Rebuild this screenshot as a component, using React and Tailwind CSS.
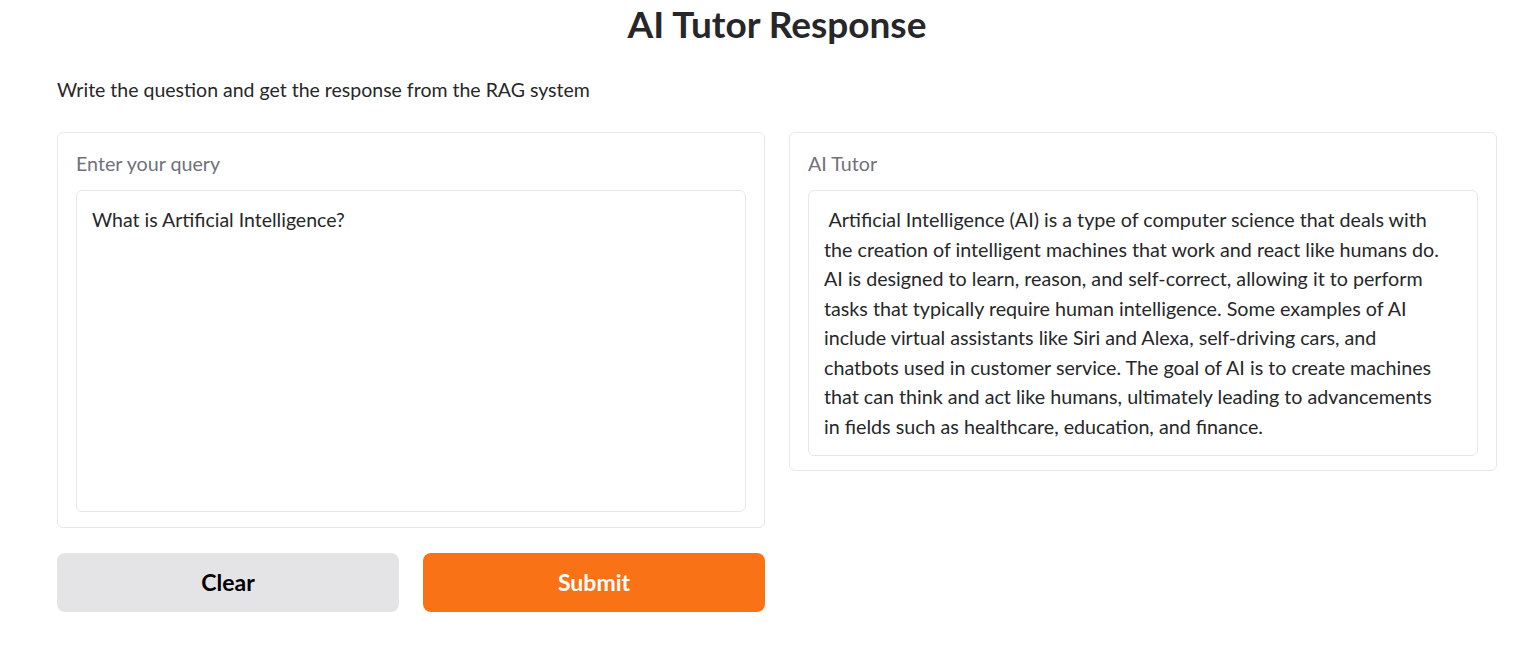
import React from 'react'

const answer = [
  '\u00a0Artificial Intelligence (AI) is a type of computer science that deals with',
  'the creation of intelligent machines that work and react like humans do.',
  'AI is designed to learn, reason, and self-correct, allowing it to perform',
  'tasks that typically require human intelligence. Some examples of AI',
  'include virtual assistants like Siri and Alexa, self-driving cars, and',
  'chatbots used in customer service. The goal of AI is to create machines',
  'that can think and act like humans, ultimately leading to advancements',
  'in fields such as healthcare, education, and finance.',
]

export default function App() {
  return (
    <div className="min-h-screen bg-white text-[#27272a]" style={{ fontFamily: 'Lato, "Noto Sans", sans-serif' }}>
      <div className="w-[1440px] ml-[57px]">
        <h1 className="text-center text-[37px] font-bold leading-[48px]">AI Tutor Response</h1>
        <p className="mt-[28px] text-[19.5px] leading-[28px]">Write the question and get the response from the RAG system</p>

        <div className="mt-[28px] flex gap-6 items-start">
          <div className="w-[708px] flex flex-col gap-[25px]">
            <div className="border border-[#e5e7eb] rounded-md px-[18px] pt-[18px] pb-[15px] h-[396px] flex flex-col">
              <div className="text-[19.7px] leading-[26px] text-[#71717a]">Enter your query</div>
              <div className="mt-[13px] flex-1 border border-[#e5e7eb] rounded-md px-[15px] pt-[15px] text-[19.5px] leading-[28px]">
                What is Artificial Intelligence?
              </div>
            </div>
            <div className="flex gap-6">
              <button className="flex-1 h-[59px] rounded-lg bg-[#e4e4e7] text-black text-[23px] font-bold">Clear</button>
              <button className="flex-1 h-[59px] rounded-lg bg-[#f97316] text-white text-[23px] font-bold">Submit</button>
            </div>
          </div>

          <div className="w-[708px] border border-[#e5e7eb] rounded-md px-[18px] pt-[18px] pb-[14px]">
            <div className="text-[19.7px] leading-[26px] text-[#71717a]">AI Tutor</div>
            <div className="mt-[13px] border border-[#e5e7eb] rounded-md px-[15px] pt-[14px] pb-[14px] text-[19.7px] leading-[29.5px] whitespace-nowrap">
              {answer.map((line, i) => (
                <div key={i}>{line}</div>
              ))}
            </div>
          </div>
        </div>
      </div>
    </div>
  )
}
